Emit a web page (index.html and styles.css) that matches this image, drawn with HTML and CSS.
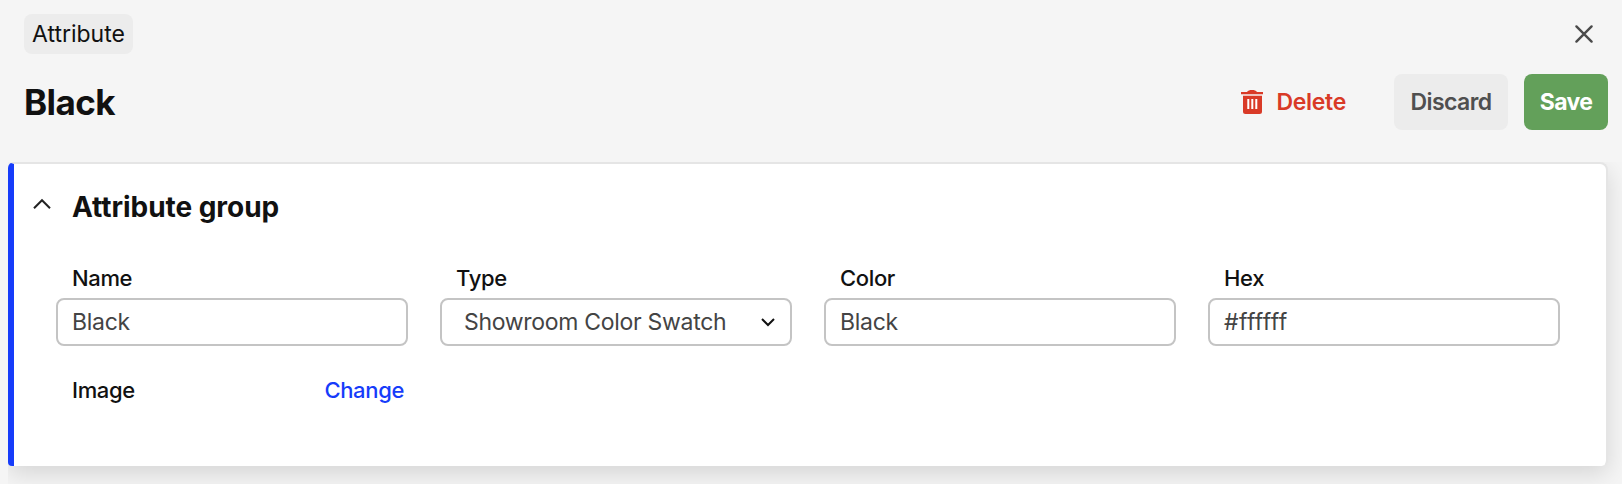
FILE: index.html
```html
<!DOCTYPE html>
<html lang="en">
<head>
<meta charset="utf-8">
<title>Attribute</title>
<link rel="stylesheet" href="styles.css">
</head>
<body>
<div class="topbar">
  <span class="badge">Attribute</span>
  <svg class="close" width="20" height="20" viewBox="0 0 20 20" fill="none" stroke="#4a4a4a" stroke-width="2.4" stroke-linecap="round"><path d="M2.400 2.400 17.600 17.600M17.600 2.400 2.400 17.600"/></svg>
</div>
<header class="header">
  <h1 class="title">Black</h1>
  <div class="actions">
    <div class="delete">
      <svg width="24" height="24" viewBox="0 0 24 24"><path fill="#d93a27" d="M1 2h6C8.200.500 9.500 0 12 0s3.800.500 5 2h6v2.300H1zM3 5.800h19V21.500a2.500 2.500 0 0 1-2.500 2.500h-14A2.500 2.500 0 0 1 3 21.500z"/><path stroke="#fff" stroke-width="2" d="M8.300 9v10M12.300 9v10M16.300 9v10"/></svg>
      <span class="delete-text">Delete</span>
    </div>
    <div class="button discard">Discard</div>
    <div class="button save">Save</div>
  </div>
</header>
<main class="panel">
  <section class="card">
    <div class="card-head">
      <svg class="chevron" width="18" height="12" viewBox="0 0 18 12" fill="none" stroke="#222" stroke-width="2"><path d="M1 10.200 9 2.200l8 8"/></svg>
      <h2 class="card-title">Attribute group</h2>
    </div>
    <div class="fields">
      <div class="field"><div class="label">Name</div><div class="input">Black</div></div>
      <div class="field"><div class="label">Type</div><div class="input select"><span>Showroom Color Swatch</span><svg width="14" height="10" viewBox="0 0 14 10" fill="none" stroke="#111" stroke-width="2"><path d="m1 2 6 6 6-6"/></svg></div></div>
      <div class="field"><div class="label">Color</div><div class="input">Black</div></div>
      <div class="field"><div class="label">Hex</div><div class="input hex">#ffffff</div></div>
    </div>
    <div class="image-row"><span>Image</span><span class="change">Change</span></div>
  </section>
</main>
</body>
</html>
```
FILE: styles.css
```css
* { box-sizing: border-box; }
body {
  margin: 0;
  height: 484px;
  overflow: hidden;
  background: #f5f5f5;
  color: #111;
  font-family: Inter, "Liberation Sans", sans-serif;
  font-size: 23px;
}
.topbar {
  display: flex;
  justify-content: space-between;
  align-items: center;
  padding: 14px 28px 0 24px;
}
.badge {
  width: 109px;
  height: 40px;
  line-height: 40px;
  padding: 0 8px;
  border-radius: 8px;
  background: #ececec;
}
.header {
  display: flex;
  justify-content: space-between;
  align-items: center;
  padding: 20px 14px 0 24px;
  height: 76px;
}
.title { margin: 0; font-size: 35px; font-weight: 700; line-height: 56px; letter-spacing: -.6px; }
.actions { display: flex; align-items: center; letter-spacing: -.5px; }
.delete {
  display: flex;
  align-items: center;
  gap: 12px;
  margin-right: 48px;
  color: #d93a27;
  font-weight: 600;
  letter-spacing: -.3px;
}
.button {
  height: 56px;
  line-height: 56px;
  border-radius: 8px;
  text-align: center;
  font-weight: 600;
}
.discard { width: 114px; margin-right: 16px; background: #ececec; color: #4f4f4f; letter-spacing: -.6px; }
.save { width: 84px; background: #63a05a; color: #fff; font-weight: 700; letter-spacing: -.7px; }
.panel { margin: 32px 0 0 8px; height: 322px; overflow: hidden; }
.card {
  width: 1600px;
  height: 304px;
  border: 2px solid #e5e5e5;
  border-left: 6px solid #163cfa;
  border-bottom: 0;
  border-radius: 6px 8px 6px 4px;
  background: #fff;
  box-shadow: 0 8px 24px rgba(0, 0, 0, .13);
  padding: 26px 46px 0 19px;
}
.card-head { display: flex; align-items: flex-start; gap: 21px; height: 32px; }
.chevron { margin-top: 8px; }
.card-title { margin: 0; height: 33px; line-height: 34px; font-size: 28px; font-weight: 700; letter-spacing: -.05px; overflow: hidden; }
.fields {
  display: grid;
  grid-template-columns: repeat(4, 352px);
  gap: 32px;
  margin: 40px 0 0 23px;
}
.label { height: 36px; line-height: 33px; padding-left: 16px; font-size: 22px; font-weight: 500; letter-spacing: -.35px; }
.input {
  display: flex;
  align-items: center;
  height: 48px;
  padding: 0 14px;
  border: 2px solid #c4c4c4;
  border-radius: 8px;
  color: #444;
  letter-spacing: -.3px;
}
.hex { letter-spacing: .35px; }
.select { justify-content: space-between; padding: 0 15px 0 22px; }
.image-row {
  display: flex;
  justify-content: space-between;
  width: 352px;
  margin: 27px 0 0 23px;
  padding: 0 4px 0 16px;
  line-height: 34px;
  font-size: 22px;
  font-weight: 500;
  letter-spacing: -.35px;
}
.change { color: #163cfa; }
```
